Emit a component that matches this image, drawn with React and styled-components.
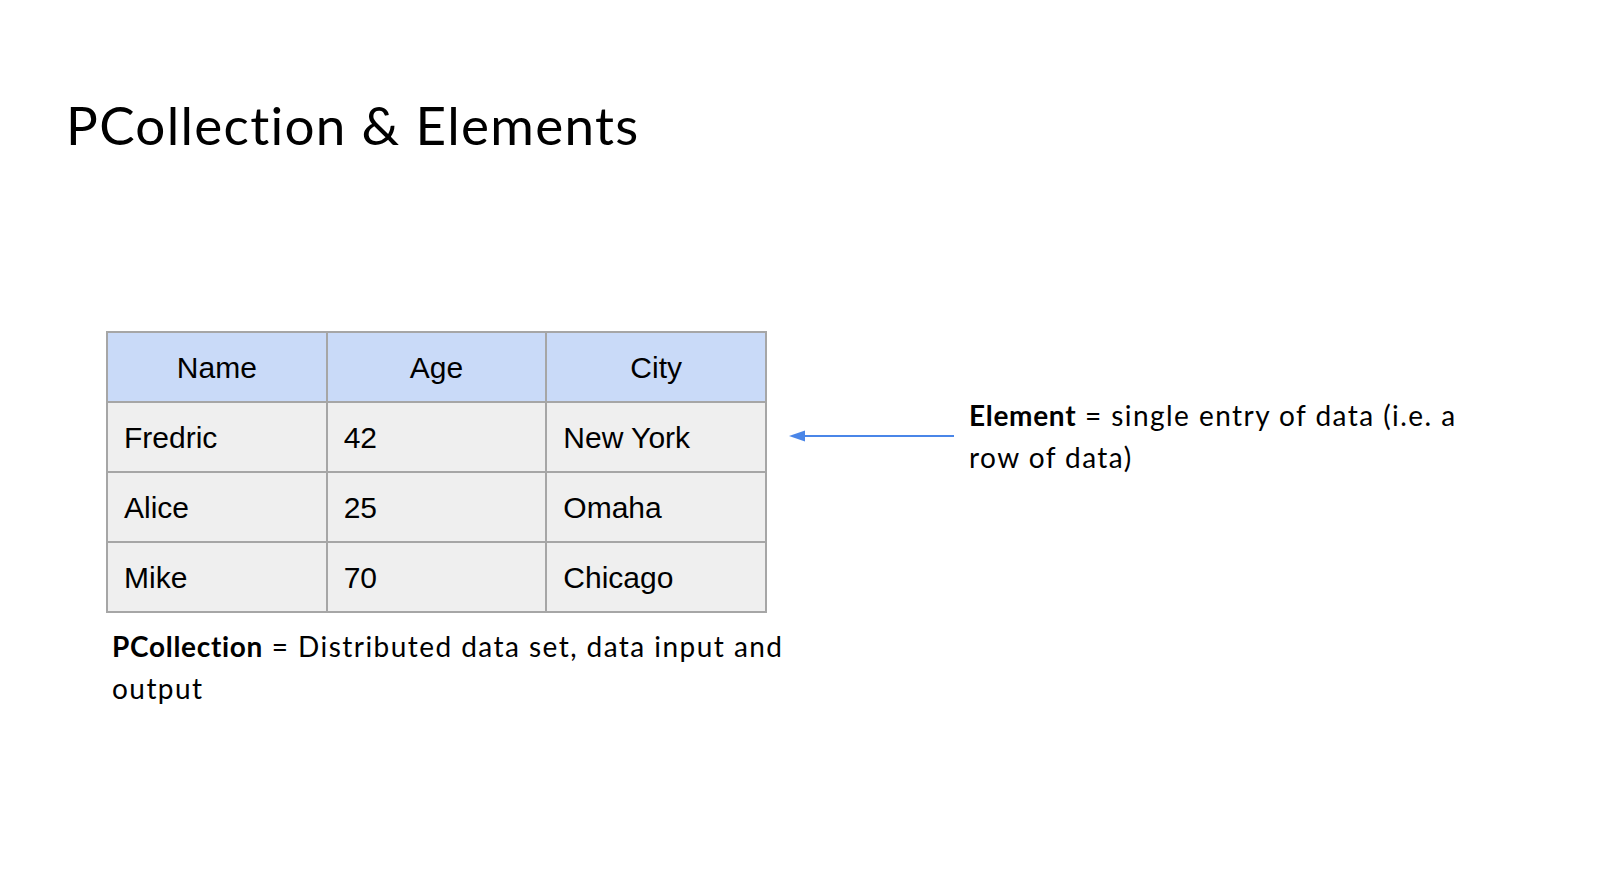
import React from 'react';
import styled, { createGlobalStyle } from 'styled-components';

const GlobalStyle = createGlobalStyle`
  html, body {
    margin: 0;
    padding: 0;
    background: #ffffff;
  }
  body {
    font-family: Lato, "Open Sans", sans-serif;
    color: #000000;
  }
`;

const Slide = styled.div`
  width: 1600px;
  height: 882px;
  box-sizing: border-box;
  padding: 94px 0 0 66px;
  overflow: hidden;
`;

const Title = styled.h1`
  margin: 0;
  font-family: Lato, sans-serif;
  font-weight: 400;
  font-size: 53px;
  line-height: 62px;
  letter-spacing: 1.3px;
`;

const Content = styled.div`
  display: flex;
  align-items: flex-start;
  margin-top: 175px;
  padding-left: 40px;
`;

const LeftColumn = styled.div`
  display: flex;
  flex: none;
  flex-direction: column;
  width: 661px;
`;

const Table = styled.table`
  border-collapse: collapse;
  width: 661px;
  table-layout: fixed;
  font-family: "Liberation Sans", Arial, sans-serif;
  font-size: 30px;
`;

const HeadCell = styled.th`
  height: 66px;
  padding: 2px 0 0;
  background: #c9daf8;
  border: 2px solid #a6a6a6;
  font-weight: 400;
  text-align: center;
  vertical-align: middle;
`;

const Cell = styled.td`
  height: 66px;
  padding: 2px 0 0 16px;
  background: #efefef;
  border: 2px solid #a6a6a6;
  text-align: left;
  vertical-align: middle;
`;

const Note = styled.p`
  flex: none;
  margin: ${(p) => p.$offset || '0'};
  width: ${(p) => p.$width};
  font-family: Lato, sans-serif;
  font-size: 28px;
  line-height: 42px;
  font-weight: 400;
  letter-spacing: 1.45px;

  b {
    font-weight: 700;
    letter-spacing: 0.7px;
  }
`;

const Pointer = styled.div`
  display: flex;
  align-items: flex-start;
  margin: 70px 0 0 22px;
`;

const Arrow = styled.svg`
  display: block;
  flex: none;
  width: 166px;
  height: 70px;
`;

const rows = [
  ['Fredric', '42', 'New York'],
  ['Alice', '25', 'Omaha'],
  ['Mike', '70', 'Chicago'],
];

export default function App() {
  return (
    <>
      <GlobalStyle />
      <Slide>
        <Title>PCollection &amp; Elements</Title>
        <Content>
          <LeftColumn>
            <Table>
              <thead>
                <tr>
                  <HeadCell>Name</HeadCell>
                  <HeadCell>Age</HeadCell>
                  <HeadCell>City</HeadCell>
                </tr>
              </thead>
              <tbody>
                {rows.map((r) => (
                  <tr key={r[0]}>
                    {r.map((c) => (
                      <Cell key={c}>{c}</Cell>
                    ))}
                  </tr>
                ))}
              </tbody>
            </Table>
            <Note $width="710px" $offset="12px 0 0 6px">
              <b>PCollection</b> = Distributed data set, data input and output
            </Note>
          </LeftColumn>
          <Pointer>
            <Arrow viewBox="0 0 166 70">
              <line x1="12" y1="35" x2="165" y2="35" stroke="#4a86e8" strokeWidth="2" />
              <polygon points="0,35 16,29.5 16,40.5" fill="#4a86e8" />
            </Arrow>
            <Note $width="520px" $offset="-7px 0 0 14px">
              <b>Element</b> = single entry of data (i.e. a row of data)
            </Note>
          </Pointer>
        </Content>
      </Slide>
    </>
  );
}
